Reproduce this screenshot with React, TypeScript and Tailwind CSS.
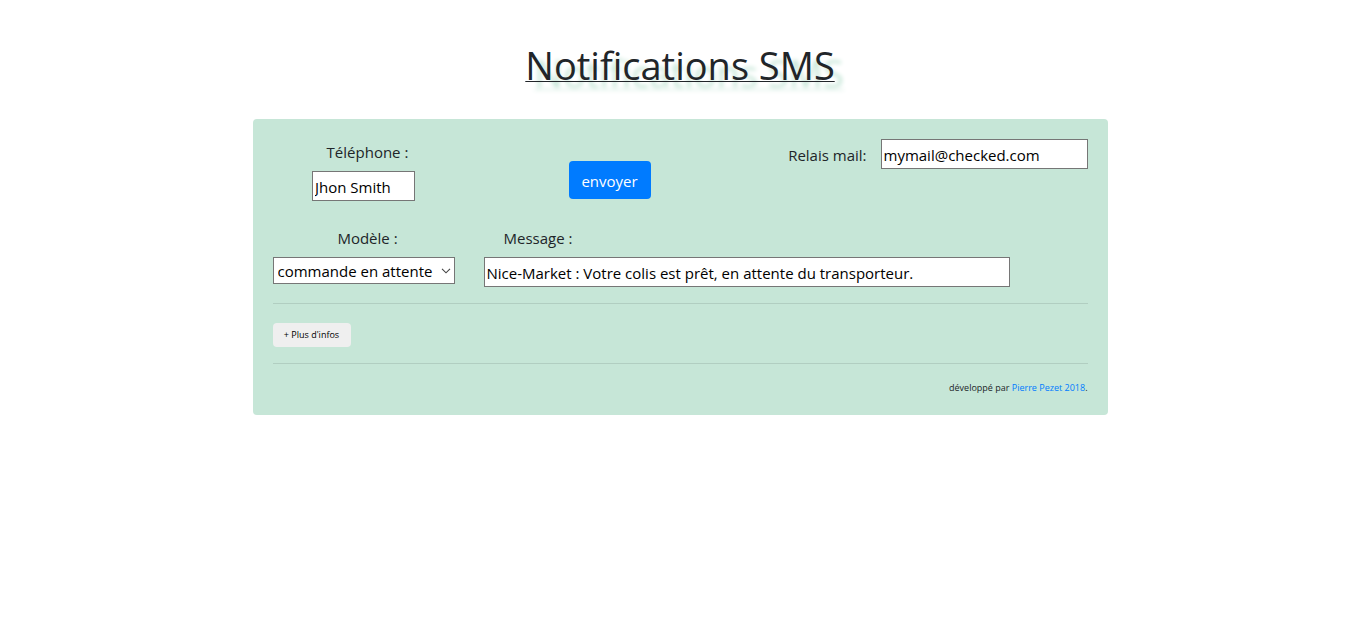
import { useState } from "react";

const MODELS = [
  {
    name: "commande en attente",
    text: "Nice-Market : Votre colis est prêt, en attente du transporteur.",
  },
];

const field =
  "h-[30px] border border-[#767676] bg-white px-[2px] pt-px text-[15px] text-black";

export default function App() {
  const [phone, setPhone] = useState("Jhon Smith");
  const [mail, setMail] = useState("mymail@checked.com");
  const [model, setModel] = useState(MODELS[0].name);
  const [message, setMessage] = useState(MODELS[0].text);

  const chooseModel = (name: string) => {
    setModel(name);
    setMessage(MODELS.find((m) => m.name === name)?.text ?? "");
  };

  return (
    <main className="px-4 pt-[41px] font-['Open_Sans','Noto_Sans',sans-serif] text-[15px] leading-6 text-[#212529]">
      <h1 className="text-center text-[38px] leading-[48px] underline decoration-1 underline-offset-1 [text-shadow:9px_8px_4px_#c6e6d7]">
        Notifications SMS
      </h1>

      <form
        className="mx-auto mt-[30px] max-w-[855px] rounded bg-[#c6e6d7] p-5"
        onSubmit={(e) => e.preventDefault()}
      >
        <div className="flex items-start">
          <div className="flex w-[182px] flex-col items-center pt-px">
            <label htmlFor="phone" className="mb-[7px] pl-2">
              Téléphone :
            </label>
            <input
              id="phone"
              type="text"
              value={phone}
              onChange={(e) => setPhone(e.target.value)}
              className={`${field} w-[103px]`}
            />
          </div>

          <button
            type="submit"
            className="mt-[22px] ml-[114px] h-[38px] w-[82px] rounded bg-[#007bff] pt-[2px] text-white"
          >
            envoyer
          </button>

          <div className="ml-auto flex items-center gap-[14px]">
            <label htmlFor="mail" className="pt-px">
              Relais mail:
            </label>
            <input
              id="mail"
              type="email"
              value={mail}
              onChange={(e) => setMail(e.target.value)}
              className={`${field} w-[207px]`}
            />
          </div>
        </div>

        <div className="mt-[25px] flex items-start gap-[29px]">
          <div className="flex w-[182px] flex-col items-center">
            <label htmlFor="model" className="mb-[7px] pl-2">
              Modèle :
            </label>
            <div className="relative w-full">
              <select
                id="model"
                value={model}
                onChange={(e) => chooseModel(e.target.value)}
                className="block h-[27px] w-full appearance-none border border-[#767676] bg-white pl-1 text-[15px] text-black"
              >
                {MODELS.map((m) => (
                  <option key={m.name}>{m.name}</option>
                ))}
              </select>
              <svg
                viewBox="0 0 10 6"
                className="pointer-events-none absolute top-[11px] right-1 h-[6px] w-[10px]"
                fill="none"
                stroke="#444"
                strokeWidth="1.1"
                aria-hidden="true"
              >
                <path d="M1 0.8 5 4.8 9 0.8" />
              </svg>
            </div>
          </div>

          <div className="flex max-w-[526px] flex-1 flex-col">
            <label htmlFor="message" className="mb-[7px] pl-5">
              Message :
            </label>
            <input
              id="message"
              type="text"
              value={message}
              onChange={(e) => setMessage(e.target.value)}
              className={`${field} w-full`}
            />
          </div>
        </div>

        <hr className="mt-4 mb-[19px] border-black/10" />
        <button
          type="button"
          className="block h-6 w-[78px] rounded bg-[#efefef] text-[9px] text-black"
        >
          + Plus d'infos
        </button>
        <hr className="my-4 border-black/10" />

        <footer className="text-right text-[9px] leading-[15px]">
          développé par{" "}
          <a href="#" className="text-[#007bff]">
            Pierre Pezet 2018
          </a>
          .
        </footer>
      </form>
    </main>
  );
}
